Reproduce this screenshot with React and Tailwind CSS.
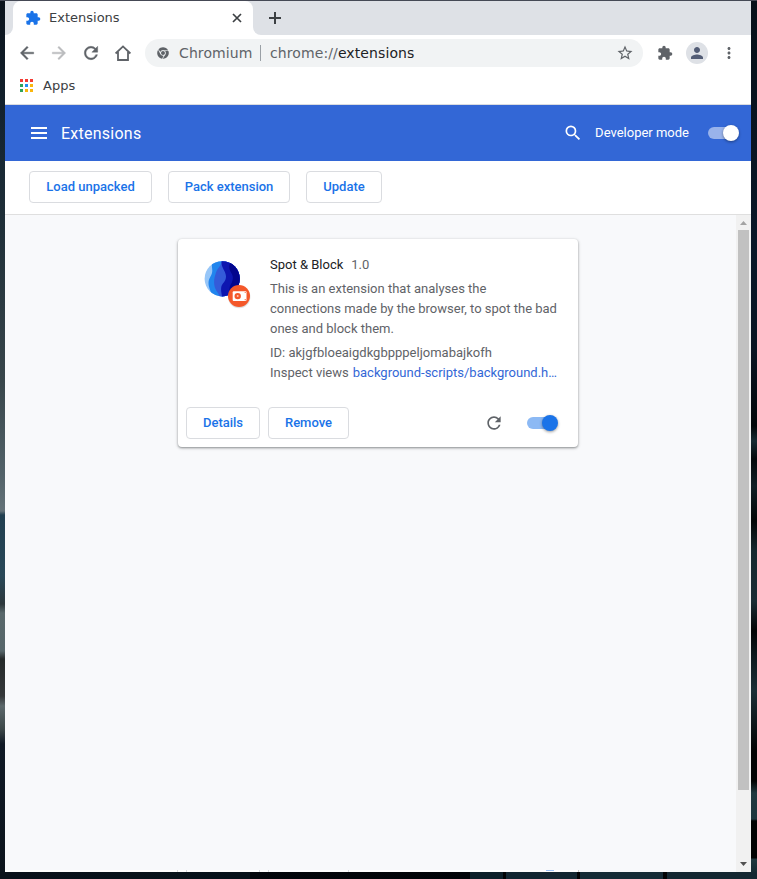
import React from "react";
import {
  MdExtension,
  MdRefresh,
  MdSearch,
  MdStarBorder,
  MdPerson,
  MdMoreVert,
} from "react-icons/md";
import { FaChrome } from "react-icons/fa";

const APP_DOTS = [
  "bg-[#f33b33]", "bg-[#f33b33]", "bg-[#f33b33]",
  "bg-[#2fa35a]", "bg-[#2490f0]", "bg-[#fab60c]",
  "bg-[#2fa35a]", "bg-[#fab60c]", "bg-[#fab60c]",
];

const ARROW_BACK = "M20 11H7.830l5.590-5.590L12 4l-8 8 8 8 1.410-1.410L7.830 13H20v-2z";
const ARROW_FORWARD = "M12 4l-1.410 1.410L16.170 11H4v2h12.170l-5.580 5.590L12 20l8-8z";
const RELOAD =
  "M17.650 6.350A7.958 7.958 0 0 0 12 4c-4.420 0-7.990 3.580-7.990 8s3.570 8 7.990 8c3.730 0 6.840-2.550 7.730-6h-2.080A5.990 5.990 0 0 1 12 18c-3.310 0-6-2.690-6-6s2.690-6 6-6c1.660 0 3.140.690 4.220 1.780L13 11h7V4l-2.350 2.350z";

/* Navigation glyph, drawn slightly heavier than the stock icon. */
function NavIcon({ d, className }) {
  return (
    <svg
      viewBox="0 0 24 24"
      className={`size-5 ${className}`}
      fill="currentColor"
      stroke="currentColor"
      strokeWidth=".5"
    >
      <path d={d} />
    </svg>
  );
}

function OutlinedButton({ className, children }) {
  return (
    <button
      className={`h-8 shrink-0 rounded border border-[#dadce0] bg-white text-center text-[13px] leading-[30px] font-medium text-[#1a73e8] ${className}`}
    >
      {children}
    </button>
  );
}

function Toggle({ track, knob }) {
  return (
    <div className="relative flex h-4 w-[31px] items-center">
      <div className={`h-3 w-7 rounded-full ${track}`} />
      <div className={`absolute top-0 right-0 size-4 rounded-full shadow-[0_1px_3px_rgba(0,0,0,0.4)] ${knob}`} />
    </div>
  );
}

function TabStrip() {
  return (
    <div className="flex h-[34px] bg-white">
      <div className="h-[34px] w-2 rounded-br-lg bg-[#dee1e6]" />
      <div className="h-[34px] w-60 bg-[#dee1e6]">
        <div className="flex h-[34px] items-center rounded-t-lg bg-white pr-2.5 pl-3">
          <MdExtension className="size-4 text-[#1a73e8]" />
          <span className="ml-2 flex-1 text-[13px] leading-4 text-[#3c4043]">Extensions</span>
          <svg viewBox="0 0 12 12" className="size-3" fill="none" stroke="#3c4043" strokeWidth="1.7">
            <path d="M2 2l8 8M10 2l-8 8" />
          </svg>
        </div>
      </div>
      <div className="flex flex-1 items-center rounded-bl-lg bg-[#dee1e6] pl-4">
        <svg viewBox="0 0 12 12" className="size-3" stroke="#3c4043" strokeWidth="2">
          <path d="M6 0v12M0 6h12" />
        </svg>
      </div>
    </div>
  );
}

function Toolbar() {
  return (
    <div className="flex h-9 items-center bg-white pl-3 text-[#5f6368]">
      <NavIcon d={ARROW_BACK} />
      <NavIcon d={ARROW_FORWARD} className="ml-3 text-[#babcbe]" />
      <NavIcon d={RELOAD} className="ml-3" />
      <svg viewBox="0 0 18 18" className="ml-[13px] size-[18px]" fill="none" stroke="currentColor" strokeWidth="1.8">
        <path d="M1.6 9.5L9 2.4l7.4 7.1M4 8v8h10V8" />
      </svg>
      <div className="ml-[13px] flex h-7 w-[498px] items-center rounded-full bg-[#f1f3f4] pr-[9px] pl-3 text-sm leading-4 tracking-[.1px]">
        <FaChrome className="size-3" />
        <span className="ml-2.5 w-[82px] border-r border-[#9aa0a6] leading-4">Chromium</span>
        <span className="ml-[9px] flex-1">
          chrome://<span className="text-[#202124]">extensions</span>
        </span>
        <MdStarBorder className="size-[18px]" />
      </div>
      <MdExtension className="ml-3.5 size-4" />
      <div className="ml-[13px] flex size-[22px] items-center justify-center rounded-full bg-[#dee1e6]">
        <MdPerson className="size-[18px] text-[#525c75]" />
      </div>
      <MdMoreVert className="ml-3 size-[18px]" />
    </div>
  );
}

function BookmarksBar() {
  return (
    <div className="flex h-[34px] items-center border-b border-[#dadce0] bg-white pb-1 pl-[15px]">
      <div className="grid grid-cols-3 gap-0.5">
        {APP_DOTS.map((color, i) => (
          <div key={i} className={`size-[3px] ${color}`} />
        ))}
      </div>
      <span className="ml-2.5 text-[13px] leading-4 text-[#3c4043]">Apps</span>
    </div>
  );
}

function ExtensionIcon() {
  return (
    <svg viewBox="0 0 48 50" className="h-[50px] w-12 shrink-0">
      <defs>
        <clipPath id="ball">
          <circle cx="18.2" cy="17.8" r="17.6" />
        </clipPath>
      </defs>
      <g clipPath="url(#ball)">
        <path fill="#97c6f8" d="M0 0h37v37H0z" />
        <path fill="#2185ee" d="M8 0C7 4 9 8 8 12S4.500 17 4.500 22 7 30 9 37h28V0z" />
        <path fill="#345bd9" d="M18 0c-1 5-4.500 7-6 11.500S9.500 20 10.500 25 15 32 16 37h21V0z" />
        <path fill="#0d16b0" d="M17.500 0c-.5 7 4.500 10 4.500 15.500s-4.300 6.500-4.800 11S18 33 18 37h19V0z" />
        <path fill="#03068d" d="M27 0c-2 4-2.500 7-.5 10.500s3 5 2 9-2.500 4-3 8 0 6 0 9.500H37V0z" />
      </g>
      <circle cx="35.2" cy="36" r="11.2" fill="#000" opacity=".12" />
      <circle cx="35" cy="35" r="11" fill="#f4582a" />
      <rect x="28.7" y="30.2" width="13.8" height="9.8" rx="1" fill="#fff" />
      <circle cx="33.7" cy="35.1" r="3.2" fill="#f4582a" />
      <circle cx="33.7" cy="35.1" r="1" fill="#ffc2b0" />
      <circle cx="41.2" cy="31.5" r=".6" fill="#f4582a" />
      <circle cx="41.2" cy="38.700" r=".6" fill="#f4582a" />
    </svg>
  );
}

function ExtensionCard() {
  return (
    <div className="flex h-[208px] w-[400px] flex-col rounded bg-white shadow-[0_1px_2px_rgba(60,64,67,0.45),0_1px_3px_1px_rgba(60,64,67,0.15)]">
      <div className="flex h-40 pt-4 pl-[26px]">
        <div className="w-[66px] pt-[6px]">
          <ExtensionIcon />
        </div>
        <div className="w-[288px] text-[13px] leading-5 text-[#5f6368]">
          <div className="flex gap-2">
            <span className="text-[#202124]">Spot &amp; Block</span>
            <span>1.0</span>
          </div>
          <p className="mt-1">
            This is an extension that analyses the
            <br />
            connections made by the browser, to spot the bad
            <br />
            ones and block them.
          </p>
          <div className="mt-1">ID: akjgfbloeaigdkgbpppeljomabajkofh</div>
          <div className="flex gap-1 whitespace-nowrap">
            <span>Inspect views</span>
            <a className="text-[#3367d6]">background-scripts/background.h…</a>
          </div>
        </div>
      </div>
      <div className="flex h-12 items-center gap-2 pr-5 pl-2">
        <OutlinedButton className="w-[74px]">Details</OutlinedButton>
        <OutlinedButton className="w-[81px]">Remove</OutlinedButton>
        <MdRefresh className="ml-auto size-5 text-[#5f6368]" />
        <div className="ml-[15px]">
          <Toggle track="bg-[#8cb9f4]" knob="bg-[#1a73e8]" />
        </div>
      </div>
    </div>
  );
}

function BottomSliver() {
  return (
    <div className="mt-auto flex h-0.5 bg-white">
      <div className="w-[173px] border-r border-[#dcdcdf]" />
      <div className="w-[9px] border-r border-[#dadce0]" />
      <div className="w-[73px] border-r border-[#dadce0]" />
      <div className="w-[9px] border-r border-[#dadce0]" />
      <div className="w-20 border-r border-[#dadce0]" />
      <div className="w-[197px]" />
      <div className="h-px w-2 bg-[#9dc3f6]" />
      <div className="w-[25px] border-r border-[#c8cacd]" />
      <div className="flex-1 bg-[#f8f9fb]" />
    </div>
  );
}

function Scrollbar() {
  return (
    <div className="flex w-[15px] flex-col items-center bg-[#f1f1f1]">
      <div className="flex h-[15px] items-center">
        <svg viewBox="0 0 7 4" className="h-1 w-[7px]" fill="#a3a3a3">
          <path d="M0 4L3.5 0 7 4z" />
        </svg>
      </div>
      <div className="h-[560px] w-[11px] bg-[#c1c1c1]" />
      <div className="mt-auto flex h-[15px] items-center pb-0.5">
        <svg viewBox="0 0 7 4" className="h-1 w-[7px]" fill="#505050">
          <path d="M0 0h7L3.5 4z" />
        </svg>
      </div>
    </div>
  );
}

export default function App() {
  return (
    <div className="flex h-[879px] w-[757px] flex-col overflow-hidden bg-[#05090d] font-['DejaVu_Sans',sans-serif]">
      <div className="h-px bg-[#454955]" />
      <div className="flex h-[871px]">
        <div className="w-[5px] bg-[linear-gradient(180deg,#0b131c_0px,#152532_130px,#203039_230px,#38464b_380px,#53636a_475px,#647278_510px,#213f50_514px,#294858_575px,#2d383c_603px,#59686b_612px,#56666a_650px,#252a2a_658px,#35383a_695px,#5c686b_705px,#3d4849_728px,#101a26_743px,#0c141c_871px)]" />
        <div className="flex w-[746px] flex-col bg-white">
          <TabStrip />
          <Toolbar />
          <BookmarksBar />
          <div className="flex flex-1 flex-col font-['Roboto',sans-serif]">
            <div className="flex h-14 items-center bg-[#3367d6] pr-3 pl-[26px] text-white">
              <svg viewBox="0 0 16 12" className="h-3 w-4" fill="currentColor">
                <path d="M0 0h16v2H0zM0 5h16v2H0zM0 10h16v2H0z" />
              </svg>
              <h1 className="ml-3.5 flex-1 pt-0.5 text-base tracking-[.25px]">Extensions</h1>
              <MdSearch className="size-5" />
              <span className="mr-[19px] ml-3 text-[13px] leading-5">Developer mode</span>
              <Toggle track="bg-[#99b3eb]" knob="bg-white" />
            </div>
            <div className="flex h-[54px] items-center gap-4 border-b border-[#dfdfdf] pb-0.5 pl-6">
              <OutlinedButton className="w-[123px]">Load unpacked</OutlinedButton>
              <OutlinedButton className="w-[122px]">Pack extension</OutlinedButton>
              <OutlinedButton className="w-[76px]">Update</OutlinedButton>
            </div>
            <div className="flex flex-1 bg-[#f8f9fb]">
              <div className="flex flex-1 flex-col pt-6">
                <div className="pl-[173px]">
                  <ExtensionCard />
                </div>
                <BottomSliver />
              </div>
              <Scrollbar />
            </div>
          </div>
        </div>
        <div className="w-1.5 bg-[linear-gradient(180deg,#071019_0px,#0a1728_240px,#0a1422_350px,#020609_425px,#172a32_440px,#04080b_458px,#101f25_485px,#030506_520px,#16272e_550px,#1a2c34_600px,#020405_630px,#0c181d_655px,#1b2e36_690px,#020303_750px,#020303_780px,#20383f_792px,#1e353d_818px,#010202_820px,#010202_857px,#20383f_858px,#152a32_871px)]" />
      </div>
      <div className="flex h-[7px] bg-[#060c12]">
        <div className="w-[250px] bg-[linear-gradient(90deg,#0a121a,#08131a)]" />
        <div className="w-[220px] bg-[linear-gradient(90deg,#04070b,#020407)]" />
        <div className="w-[33px] bg-[#0d2029]" />
        <div className="w-[3px] bg-[#010304]" />
        <div className="w-[71px] bg-[#132731]" />
        <div className="w-[3px] bg-[#010304]" />
        <div className="w-[83px] bg-[#152b36]" />
        <div className="w-1 bg-[#010304]" />
        <div className="flex-1 bg-[#132731]" />
      </div>
    </div>
  );
}
